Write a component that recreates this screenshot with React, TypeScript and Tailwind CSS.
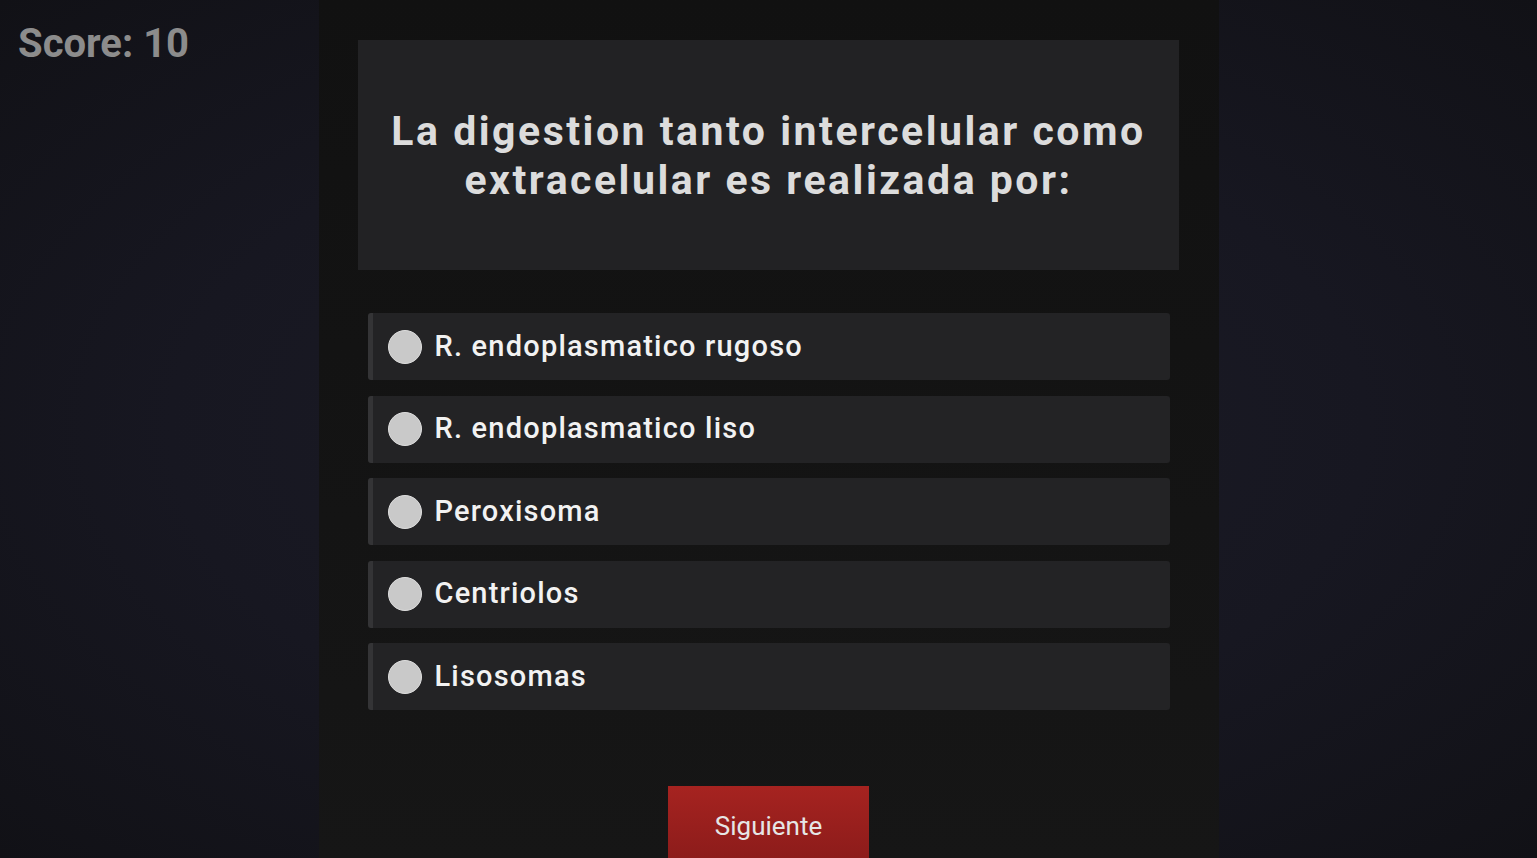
import React from "react";

const options = [
  "R. endoplasmatico rugoso",
  "R. endoplasmatico liso",
  "Peroxisoma",
  "Centriolos",
  "Lisosomas",
];

export default function App() {
  return (
    <div
      className="h-[858px] w-full overflow-hidden grid grid-cols-[1fr_900px_1fr] bg-[radial-gradient(ellipse_at_center,#1c1c27_0%,#171721_55%,#111116_100%)]"
      style={{ fontFamily: "Roboto, 'Liberation Sans', sans-serif" }}
    >
      <div className="pl-[18px] pt-[20px]">
        <div className="text-[40px] leading-[48px] font-bold text-[#8c8c8c]">Score: 10</div>
      </div>
      <div className="flex flex-col items-center bg-gradient-to-b from-[#111111] to-[#161616] pt-10">
        <div className="w-[821px] h-[230px] bg-[#222224] flex justify-center pt-[67px]">
          <h1 className="text-center font-bold text-[41px] leading-[49px] tracking-[2.5px] text-[#dcdcdc] w-[800px]">
            La digestion tanto intercelular como extracelular es realizada por:
          </h1>
        </div>
        <div className="mt-[43px] w-[802px] flex flex-col gap-[15.5px]">
          {options.map((o) => (
            <div
              key={o}
              className="h-[67px] bg-[#232325] border-l-[5px] border-[#343436] rounded-[3px] flex items-center pl-[15px]"
            >
              <span className="w-[34px] h-[34px] rounded-full bg-[#c9c9c9] border border-[#dedede] shrink-0" />
              <span className="ml-[13px] text-[29px] font-medium text-[#f2f2f2] tracking-[1.2px]">{o}</span>
            </div>
          ))}
        </div>
        <button className="mt-[76px] w-[201px] h-[80px] bg-gradient-to-b from-[#a62320] to-[#8a1b1a] text-[#e6e6e6] text-[26px] flex items-center justify-center">
          Siguiente
        </button>
      </div>
      <div />
    </div>
  );
}
